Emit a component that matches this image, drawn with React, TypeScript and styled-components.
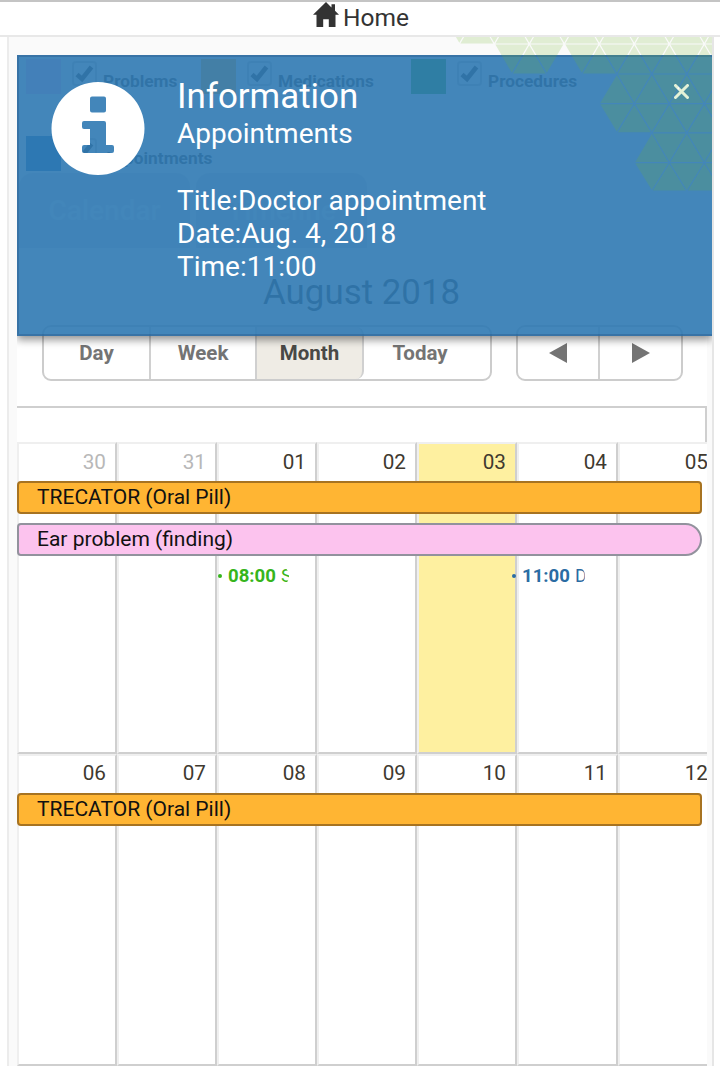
import React from 'react';
import styled, { createGlobalStyle } from 'styled-components';

const Global = createGlobalStyle`
  * { box-sizing: border-box; }
  html, body { margin: 0; padding: 0; }
  body { background: #fff; font-family: Roboto, "Liberation Sans", sans-serif; }
`;

const Page = styled.div`
  position: relative;
  width: 720px;
  height: 1066px;
  overflow: hidden;
  display: flex;
  flex-direction: column;
  background: #fff;
`;

const TopBar = styled.header`
  flex: none;
  height: 37px;
  display: flex;
  align-items: center;
  justify-content: center;
  gap: 4px;
  padding: 0 0 2px 2px;
  border-top: 2px solid #c4c4c4;
  border-bottom: 2px solid #e8e8e8;
  font-size: 24.5px;
  color: #333;
  background: #fff;
  svg { display: block; margin-top: -5px; }
`;

const Panel = styled.main`
  flex: 1;
  min-height: 0;
  margin: 0 6px 0 7px;
  padding: 22px 5px 0 8px;
  border-left: 2px solid #ececec;
  border-right: 2px solid #e6e6e6;
  background: #fafafa;
  overflow: hidden;
`;

const Legend = styled.div`
  display: grid;
  grid-template-columns: 175px 210px 210px;
  grid-auto-rows: 35px;
  row-gap: 42px;
  padding-left: 9px;
`;

const LegendItem = styled.label`
  display: flex;
  align-items: flex-start;
  white-space: nowrap;
`;

const Swatch = styled.span<{ $color: string }>`
  flex: none;
  width: 35px;
  height: 35px;
  background: ${p => p.$color};
`;

const Checkbox = styled.span`
  flex: none;
  width: 25px;
  height: 25px;
  margin: 2px 6px 0 11px;
  border: 2px solid #ccc;
  border-radius: 4px;
  svg { display: block; }
`;

const LegendText = styled.span`
  margin-top: 12px;
  font-size: 17.3px;
  line-height: 21px;
  font-weight: 700;
  color: #444;
`;

const Tabs = styled.nav`
  display: flex;
  gap: 6px;
  margin-top: 2px;
  padding-left: 2px;
`;

const Tab = styled.div`
  width: 171px;
  height: 75px;
  display: flex;
  align-items: center;
  justify-content: center;
  border-radius: 14px 14px 0 0;
  background: #dfe1e4;
  font-size: 28px;
  font-weight: 500;
  color: #f4f8fc;
`;

const Calendar = styled.section`
  width: 690px;
  height: 818px;
  background: #fff;
  overflow: hidden;
`;

const MonthTitle = styled.h2`
  margin: 0;
  height: 77px;
  padding: 27px 0 0 246px;
  font-size: 34.9px;
  line-height: 36px;
  font-weight: 400;
  color: #3a3a3a;
`;

const Controls = styled.div`
  display: flex;
  gap: 24px;
  padding-left: 25px;
`;

const ButtonGroup = styled.div`
  display: flex;
  height: 56px;
  border: 2px solid #ccc;
  border-radius: 9px;
  background: #fff;
  overflow: hidden;
`;

const Button = styled.div<{ $width: number; $active?: boolean; $last?: boolean; $trail?: number }>`
  width: ${p => p.$width}px;
  display: flex;
  align-items: center;
  justify-content: center;
  padding-right: ${p => p.$trail ?? 0}px;
  border-right: ${p => (p.$last ? 0 : 2)}px solid #d0d0d0;
  border-radius: ${p => (p.$active ? '0 8px 8px 0' : 0)};
  background: ${p => (p.$active ? '#efece5' : 'transparent')};
  font-size: 20.5px;
  font-weight: 700;
  color: ${p => (p.$active ? '#494946' : '#747474')};
`;

const DayHeader = styled.div`
  height: 36px;
  margin-top: 25px;
  border-top: 2px solid #cfcfcf;
  border-right: 2px solid #cfcfcf;
`;

const Week = styled.div`
  display: grid;
  width: 702px;
  height: 312px;
  > * { grid-area: 1 / 1; }
`;

const columns = '100px 100px 100px 100px 100px 101px 101px';

const Cells = styled.div<{ $top: number }>`
  display: grid;
  grid-template-columns: ${columns};
  > * { padding-top: ${p => p.$top}px; }
`;

const Cell = styled.div<{ $today?: boolean; $muted?: boolean }>`
  border: 2px solid #efefef;
  border-right-color: #cfcfcf;
  border-bottom-color: #cfcfcf;
  padding-right: 9px;
  text-align: right;
  font-size: 20.7px;
  line-height: 24px;
  color: ${p => (p.$muted ? '#b8b8b8' : '#40392f')};
  background: ${p => (p.$today ? '#fef0a0' : '#fff')};
`;

const Events = styled.div`
  display: flex;
  flex-direction: column;
  gap: 9px;
  padding-top: 39px;
`;

const EventBar = styled.div<{ $color: string; $border: string; $rounded?: boolean }>`
  width: 685px;
  height: 33px;
  padding-left: 18px;
  border: 2px solid ${p => p.$border};
  border-radius: ${p => (p.$rounded ? '4px 17px 17px 4px' : '4px')};
  background: ${p => p.$color};
  font-size: 21px;
  line-height: 28px;
  color: #111;
`;

const TimedRow = styled.div`
  display: grid;
  grid-template-columns: ${columns};
`;

const TimedEvent = styled.div<{ $col: number; $color: string; $width: number; $shift?: number }>`
  grid-column: ${p => p.$col};
  width: ${p => p.$width}px;
  margin-left: ${p => p.$shift ?? 0}px;
  display: flex;
  align-items: center;
  overflow: hidden;
  border-radius: 0 11px 11px 0;
  white-space: nowrap;
  font-size: 18.6px;
  line-height: 22px;
  color: ${p => p.$color};
  b { margin-right: 5px; }
  &::before {
    content: '';
    flex: none;
    width: 4px;
    height: 4px;
    margin: 0 6px 0 1px;
    border-radius: 2px;
    background: currentColor;
  }
`;

const HexPattern = styled.svg`
  position: absolute;
  left: 440px;
  top: 37px;
  pointer-events: none;
`;

const Toast = styled.aside`
  position: absolute;
  left: 17px;
  top: 55px;
  width: 695px;
  height: 281px;
  display: flex;
  padding: 25px 21px 0 32px;
  border: 2px solid rgba(34, 100, 156, 0.9);
  border-right: 0;
  background: rgba(47, 121, 178, 0.9);
  background-clip: padding-box;
  box-shadow: 0 4px 8px rgba(0, 0, 0, 0.42);
  clip-path: inset(0 0 -20px 0);
  color: #fff;
`;

const ToastBody = styled.div`
  flex: 1;
  margin-left: 32px;
  font-size: 28px;
  line-height: 33px;
  p { margin: 0; }
  p + p { margin-top: 34px; }
`;

const ToastTitle = styled.h1`
  margin: -5px 0 0;
  font-size: 34.9px;
  line-height: 40px;
  font-weight: 400;
`;

const CloseButton = styled.div`
  width: 15px;
  height: 15px;
  margin: 2px 2px 0 0;
`;

const HomeIcon = () => (
  <svg width="26" height="26" viewBox="0 0 26 26" fill="#333">
    <path d="M13 0 L18.5 5.4 V2.3 H22 V8.8 L26 12.8 H22.5 V25 H15.8 V17.2 H10.2 V25 H3.5 V12.8 H0 Z" />
  </svg>
);

const Check = () => (
  <svg width="21" height="21" viewBox="0 0 21 21" fill="none" stroke="#444" strokeWidth="4.6">
    <path d="M3 11.5 L8 16 L17.5 4" />
  </svg>
);

const InfoIcon = () => (
  <svg width="94" height="94" viewBox="0 0 94 94" fill="#fff">
    <path
      fillRule="evenodd"
      d="M47 0 a46.5 46.5 0 1 1 0 93 a46.5 46.5 0 1 1 0 -93 z
         M41 14.5 h12 a2 2 0 0 1 2 2 v12 a2 2 0 0 1 -2 2 h-12 a2 2 0 0 1 -2 -2 v-12 a2 2 0 0 1 2 -2 z
         M33 39 h20 a2 2 0 0 1 2 2 v22 h6 a2 2 0 0 1 2 2 v4 a2 2 0 0 1 -2 2 h-28 a2 2 0 0 1 -2 -2 v-4 a2 2 0 0 1 2 -2 h6 v-16 h-6 a2 2 0 0 1 -2 -2 v-4 a2 2 0 0 1 2 -2 z"
    />
  </svg>
);

const CloseIcon = () => (
  <svg width="15" height="15" viewBox="0 0 15 15" stroke="#fff" strokeWidth="3" strokeLinecap="round">
    <path d="M1.5 1.5 L13.5 13.5 M13.5 1.5 L1.5 13.5" />
  </svg>
);

const Arrow = ({ left }: { left?: boolean }) => (
  <svg width="18" height="20" viewBox="0 0 18 20" fill="#747474">
    <path d={left ? 'M18 0 V20 L0 10 Z' : 'M0 0 V20 L18 10 Z'} />
  </svg>
);

const SIDE = 35;
// Each band holds the triangles between two lattice lines; `start` is the left end of the wider edge.
const bands = [
  { top: 14, bottom: 44, start: 441.8, down: true, skip: [] as number[] },
  { top: 44, bottom: 74, start: 494.3, down: true, skip: [3] },
  { top: 74, bottom: 103.7, start: 599.3, down: false, skip: [] },
  { top: 103.7, bottom: 132.8, start: 599.3, down: true, skip: [] },
  { top: 132.8, bottom: 162.7, start: 634.3, down: false, skip: [] },
  { top: 162.7, bottom: 191, start: 634.3, down: true, skip: [] },
];

const triangles: string[] = [];
bands.forEach(({ top, bottom, start, down, skip }) => {
  for (let i = 0; i < 18; i++) {
    const x = start + (i * SIDE) / 2;
    if (x > 712 || skip.includes(i)) continue;
    const pointsDown = down === (i % 2 === 0);
    const base = pointsDown ? top : bottom;
    const apex = pointsDown ? bottom : top;
    const cx = x + SIDE / 2;
    const cy = (base * 2 + apex) / 3;
    const inset = (px: number, py: number) =>
      `${(cx + (px - cx) * 0.94 - 440).toFixed(1)},${(cy + (py - cy) * 0.94 - 37).toFixed(1)}`;
    triangles.push([inset(x, base), inset(x + SIDE, base), inset(cx, apex)].join(' '));
  }
});

const Hexagons = () => (
  <HexPattern width="272" height="160" viewBox="0 0 272 160">
    {triangles.map(points => (
      <polygon key={points} points={points} fill="rgba(110,180,45,0.19)" />
    ))}
  </HexPattern>
);

const legend = [
  { label: 'Problems', color: '#fcc2ee' },
  { label: 'Medications', color: '#ffb733' },
  { label: 'Procedures', color: '#35b01e' },
  { label: 'Appointments', color: '#1f71b5' },
];

export default function App() {
  return (
    <>
      <Global />
      <Page>
        <TopBar>
          <HomeIcon />
          Home
        </TopBar>
        <Panel>
          <Legend>
            {legend.map(item => (
              <LegendItem key={item.label}>
                <Swatch $color={item.color} />
                <Checkbox><Check /></Checkbox>
                <LegendText>{item.label}</LegendText>
              </LegendItem>
            ))}
          </Legend>
          <Tabs>
            <Tab>Calendar</Tab>
            <Tab>Timeline</Tab>
          </Tabs>
          <Calendar>
            <MonthTitle>August 2018</MonthTitle>
            <Controls>
              <ButtonGroup>
                <Button $width={107}>Day</Button>
                <Button $width={106}>Week</Button>
                <Button $width={107} $active>Month</Button>
                <Button $width={126} $last $trail={14}>Today</Button>
              </ButtonGroup>
              <ButtonGroup>
                <Button $width={82}><Arrow left /></Button>
                <Button $width={81} $last><Arrow /></Button>
              </ButtonGroup>
            </Controls>
            <DayHeader />
            <Week>
              <Cells $top={6}>
                <Cell $muted>30</Cell>
                <Cell $muted>31</Cell>
                <Cell>01</Cell>
                <Cell>02</Cell>
                <Cell $today>03</Cell>
                <Cell>04</Cell>
                <Cell>05</Cell>
              </Cells>
              <Events>
                <EventBar $color="#ffb533" $border="#a77321">TRECATOR (Oral Pill)</EventBar>
                <EventBar $color="#fcc3ee" $border="#92929d" $rounded>Ear problem (finding)</EventBar>
                <TimedRow>
                  <TimedEvent $col={3} $width={72} $color="#36b51c"><b>08:00</b>S</TimedEvent>
                  <TimedEvent $col={6} $width={74} $color="#2a6ca3" $shift={-6}><b>11:00</b>D</TimedEvent>
                </TimedRow>
              </Events>
            </Week>
            <Week>
              <Cells $top={5}>
                {['06', '07', '08', '09', '10', '11', '12'].map(day => (
                  <Cell key={day}>{day}</Cell>
                ))}
              </Cells>
              <Events>
                <EventBar $color="#ffb533" $border="#a77321">TRECATOR (Oral Pill)</EventBar>
              </Events>
            </Week>
          </Calendar>
        </Panel>
        <Toast>
          <InfoIcon />
          <ToastBody>
            <ToastTitle>Information</ToastTitle>
            <p>Appointments</p>
            <p>
              Title:Doctor appointment<br />
              Date:Aug. 4, 2018<br />
              Time:11:00
            </p>
          </ToastBody>
          <CloseButton><CloseIcon /></CloseButton>
        </Toast>
        <Hexagons />
      </Page>
    </>
  );
}
